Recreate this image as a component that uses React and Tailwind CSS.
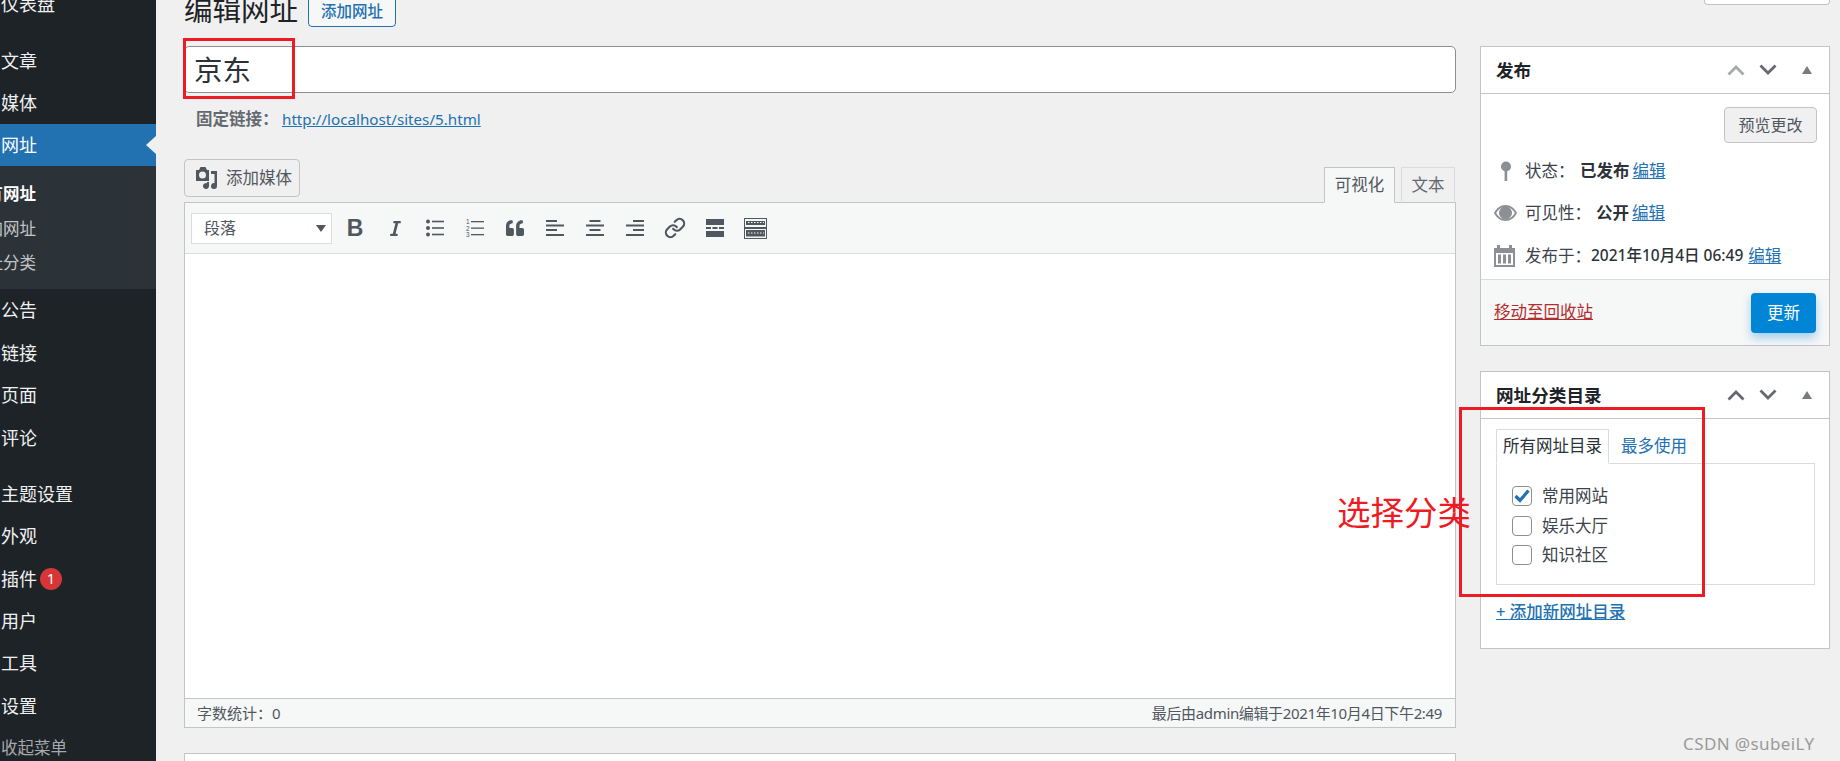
import React from "react";
import { Link as LinkIcon } from "lucide-react";
import { FaItalic, FaQuoteLeft } from "react-icons/fa";

const menuMid = ["公告", "链接", "页面", "评论"];
const menuBottom = ["主题设置", "外观", "插件", "用户", "工具", "设置"];

const SideItem = ({ label, children }) => (
  <div className="h-[42.4px] flex items-center pl-[1px] text-[18px] leading-none text-[#f0f0f1] whitespace-nowrap">
    {label}
    {children}
  </div>
);

const Chevron = ({ up, color }) => (
  <svg width="18" height="12" viewBox="0 0 18 12" fill="none" stroke={color} strokeWidth="2.8">
    <polyline points={up ? "1.5,10.5 9,3 16.5,10.5" : "1.5,1.5 9,9 16.5,1.5"} />
  </svg>
);

const Triangle = () => (
  <svg width="10" height="8" viewBox="0 0 10 8" fill="#787c82">
    <polygon points="5,0 10,8 0,8" />
  </svg>
);

const BoxHeader = ({ title, upColor }) => (
  <div className="h-[47px] flex items-center pl-[15px] pr-[17px] border-b border-[#c3c4c7]">
    <span className="flex-1 text-[17.6px] font-bold text-[#1d2327]">{title}</span>
    <div className="flex items-center gap-[14px]">
      <Chevron up color={upColor} />
      <Chevron color="#646970" />
    </div>
    <div className="ml-[25px]">
      <Triangle />
    </div>
  </div>
);

const ToolIcon = ({ children }) => (
  <div className="w-[40px] h-[30px] flex items-center justify-center text-[#50575e]">{children}</div>
);

const AlignIcon = ({ lines }) => (
  <svg width="18" height="18" viewBox="0 0 18 18" fill="#50575e">
    {lines.map(([x, y, w]) => (
      <rect key={y} x={x} y={y} width={w} height="2" />
    ))}
  </svg>
);

const BulletIcon = () => (
  <svg width="18" height="18" viewBox="0 0 18 18" fill="#50575e">
    <circle cx="2" cy="2.5" r="2" />
    <circle cx="2" cy="9" r="2" />
    <circle cx="2" cy="15.5" r="2" />
    <rect x="6" y="1.7" width="12" height="1.6" />
    <rect x="6" y="8.2" width="12" height="1.6" />
    <rect x="6" y="14.7" width="12" height="1.6" />
  </svg>
);

const NumberIcon = () => (
  <svg width="18" height="20" viewBox="0 0 18 20" fill="#50575e">
    <text x="0" y="6" fontSize="6.5" fontFamily="Liberation Sans">1</text>
    <text x="0" y="12.5" fontSize="6.5" fontFamily="Liberation Sans">2</text>
    <text x="0" y="19" fontSize="6.5" fontFamily="Liberation Sans">3</text>
    <rect x="5" y="3" width="13" height="1.3" />
    <rect x="5" y="9.5" width="13" height="1.3" />
    <rect x="5" y="16" width="13" height="1.3" />
  </svg>
);

const MoreIcon = () => (
  <svg width="18" height="20" viewBox="0 0 18 20" fill="#50575e">
    <rect x="0" y="1" width="18" height="6" />
    <rect x="0" y="9" width="5" height="2" />
    <rect x="6.5" y="9" width="5" height="2" />
    <rect x="13" y="9" width="5" height="2" />
    <rect x="0" y="13" width="18" height="6" />
  </svg>
);

const KitchenIcon = () => (
  <svg width="23" height="21" viewBox="0 0 23 21" fill="none" stroke="#50575e">
    <rect x="0.5" y="0.5" width="22" height="20" strokeWidth="1" />
    <rect x="2" y="3" width="19" height="4" fill="#50575e" stroke="none" />
    <line x1="0" y1="10" x2="23" y2="10" strokeWidth="2" />
    <rect x="2" y="12" width="19" height="6.5" fill="#50575e" stroke="none" />
    <line x1="4" y1="4.5" x2="20" y2="4.5" stroke="#f6f7f7" strokeDasharray="1.5 1.5" />
    <line x1="4" y1="15" x2="20" y2="15" stroke="#f6f7f7" strokeDasharray="1.5 1.5" />
  </svg>
);

const MediaIcon = () => (
  <svg width="22" height="22" viewBox="0 0 22 22" fill="#50575e">
    <path d="M0 3h3l1.500-3h5L11 3h2v11H0z M6.500 4.500a3.500 3.500 0 1 0 0 7a3.500 3.500 0 0 0 0-7z" fillRule="evenodd" />
    <path d="M15 4h6v15a3 3 0 1 1-2.500-3V7H15z" />
    <path d="M11 15h2v4a3 3 0 1 1-2-2.800z" />
  </svg>
);

const PinIcon = () => (
  <svg width="12" height="20" viewBox="0 0 12 20" fill="#8c8f94">
    <circle cx="6" cy="5.5" r="5" />
    <rect x="4.6" y="9" width="2.6" height="11" />
  </svg>
);

const EyeIcon = () => (
  <svg width="23" height="16" viewBox="0 0 23 16" fill="#8c8f94">
    <path
      fillRule="evenodd"
      d="M11.5 0C6.5 0 2.4 3.2 0 8c2.4 4.800 6.500 8 11.500 8S20.600 12.800 23 8c-2.400-4.800-6.500-8-11.500-8zM2.200 8C3.800 5.200 6 3.200 8.200 2.300a6.500 6.500 0 1 0 6.600 0C17 3.200 19.200 5.200 20.800 8c-2 3.500-5.400 6.300-9.300 6.300S4.200 11.500 2.200 8z"
    />
  </svg>
);

const CalendarIcon = () => (
  <svg width="21" height="22" viewBox="0 0 21 22" fill="#8c8f94">
    <path fillRule="evenodd" d="M0 3h3V0h3v3h9V0h3v3h3v19H0zM2 8v12h17V8z" />
    <rect x="4" y="9.500" width="3" height="9" />
    <rect x="9" y="9.500" width="3" height="9" />
    <rect x="14" y="9.500" width="3" height="9" />
  </svg>
);

const Check = ({ checked }) => (
  <span className="w-[20px] h-[20px] shrink-0 rounded-[4px] border border-[#8c8f94] bg-white flex items-center justify-center">
    {checked && (
      <svg width="16" height="14" viewBox="0 0 16 14" fill="none" stroke="#2271b1" strokeWidth="3.2">
        <polyline points="1.500,7 6,11.500 14.500,1.500" />
      </svg>
    )}
  </span>
);

export default function App() {
  return (
    <div className="relative w-[1840px] h-[761px] overflow-hidden flex bg-[#f0f0f0] font-['Noto_Sans','Noto_Sans_CJK_SC',sans-serif] text-[#3c434a]">
      {/* admin menu, the page is scrolled and its left edge cut off */}
      <aside className="w-[156px] shrink-0 bg-[#1d2327] overflow-hidden">
        <div className="-mt-[17px]">
          <SideItem label="仪表盘" />
          <div className="h-[14px]" />
          <SideItem label="文章" />
          <SideItem label="媒体" />
          <div className="relative h-[42px] bg-[#2271b1] flex items-center pl-[1px] text-[18px] leading-none text-white">
            网址
            <span className="absolute right-0 top-[12px] w-0 h-0 border-y-[9px] border-y-transparent border-r-[10px] border-r-[#f0f0f0]" />
          </div>
          <div className="h-[123px] bg-[#2c3338] pt-[11px] text-[16.5px] leading-none whitespace-nowrap">
            <div className="h-[34.5px] flex items-center -ml-[30px] font-bold text-white">所有网址</div>
            <div className="h-[34.5px] flex items-center -ml-[30px] text-[#c3c4c7]">添加网址</div>
            <div className="h-[34.5px] flex items-center -ml-[30px] text-[#c3c4c7]">网址分类</div>
          </div>
          {menuMid.map((m) => (
            <SideItem key={m} label={m} />
          ))}
          <div className="h-[14px]" />
          {menuBottom.map((m) => (
            <SideItem key={m} label={m}>
              {m === "插件" && (
                <span className="ml-[3px] w-[22px] h-[22px] rounded-full bg-[#d63638] text-white text-[14px] flex items-center justify-center">
                  1
                </span>
              )}
            </SideItem>
          ))}
          <div className="h-[42px] flex items-center pl-[1px] text-[16.5px] leading-none text-[#a7aaad]">收起菜单</div>
        </div>
      </aside>

      <main className="flex-1 flex pl-[28px] pr-[10px] gap-[24px] items-start min-w-0">
        {/* left column */}
        <div className="w-[1272px] shrink-0">
          <div className="h-[28px] flex items-end gap-[10px] overflow-hidden">
            <h1 className="text-[28.5px] leading-[36px] text-[#1d2327] whitespace-nowrap">编辑网址</h1>
            <span className="h-[40px] w-[88px] mb-px rounded-[4px] border border-[#2271b1] bg-[#f6f7f7] text-[#2271b1] text-[15.500px] flex items-end justify-center pb-[3px] font-medium">
              添加网址
            </span>
          </div>
          <div className="mt-[18px] h-[47px] rounded-[5px] border border-[#8c8f94] bg-white flex items-center pl-[9px] pt-px text-[28.500px] text-[#2c3338]">
            京东
          </div>
          <div className="mt-[14px] h-[24px] flex items-center pl-[12px] text-[#646970]">
            <span className="font-semibold w-[86px] text-[16.500px] whitespace-nowrap">固定链接：</span>
            <a className="text-[#2271b1] underline text-[15.200px]">http://localhost/sites/5.html</a>
          </div>
          <div className="mt-[28px] flex items-end justify-between">
            <div className="w-[116px] h-[38px] mb-[5px] rounded-[4px] border border-[#c3c4c7] bg-[#f0f0f0] flex items-center pl-[11px] gap-[8px] text-[16.500px] text-[#50575e]">
              <MediaIcon />
              添加媒体
            </div>
            <div className="flex gap-[6px] pr-px -mb-px relative">
              <div className="w-[71px] h-[36px] border border-[#c3c4c7] border-b-[#f6f7f7] bg-[#f6f7f7] flex items-center justify-center text-[16.500px] text-[#50575e]">
                可视化
              </div>
              <div className="w-[54px] h-[36px] border border-[#dcdcde] border-b-[#c3c4c7] bg-[#f0f0f0] flex items-center justify-center text-[16.500px] text-[#646970]">
                文本
              </div>
            </div>
          </div>
          <div className="border border-[#c3c4c7]">
            <div className="h-[51px] bg-[#f6f7f7] border-b border-[#dcdcde] flex items-center pl-[6px]">
              <div className="w-[141px] h-[31px] bg-white border border-[#dcdcde] flex items-center justify-between pl-[12px] pr-[5px] mr-[3px] text-[16px] text-[#50575e]">
                段落
                <span className="w-0 h-0 border-x-[5px] border-x-transparent border-t-[7px] border-t-[#50575e]" />
              </div>
              <ToolIcon><span className="font-['Liberation_Sans',sans-serif] font-bold text-[23px] leading-none">B</span></ToolIcon>
              <ToolIcon><FaItalic size={17} /></ToolIcon>
              <ToolIcon><BulletIcon /></ToolIcon>
              <ToolIcon><NumberIcon /></ToolIcon>
              <ToolIcon><FaQuoteLeft size={18} /></ToolIcon>
              <ToolIcon>
                <AlignIcon lines={[[0, 1, 11], [0, 5.500, 18], [0, 10, 11], [0, 15, 18]]} />
              </ToolIcon>
              <ToolIcon>
                <AlignIcon lines={[[3.500, 1, 11], [0, 5.500, 18], [3.500, 10, 11], [0, 15, 18]]} />
              </ToolIcon>
              <ToolIcon>
                <AlignIcon lines={[[7, 1, 11], [0, 5.500, 18], [7, 10, 11], [0, 15, 18]]} />
              </ToolIcon>
              <ToolIcon><LinkIcon size={22} strokeWidth={2.4} /></ToolIcon>
              <ToolIcon><MoreIcon /></ToolIcon>
              <ToolIcon><KitchenIcon /></ToolIcon>
            </div>
            <div className="h-[444px] bg-white" />
            <div className="h-[29px] bg-[#f6f7f7] border-t border-[#c3c4c7] flex items-center justify-between pl-[12px] pr-[13px] text-[15px] text-[#50575e]">
              <span>字数统计：0</span>
              <span className="tracking-[-0.35px]">最后由admin编辑于2021年10月4日下午2:49</span>
            </div>
          </div>
          <div className="mt-[25px] h-[40px] border border-[#c3c4c7] bg-white" />
        </div>

        {/* right column */}
        <div className="w-[350px] shrink-0">
          <div className="flex justify-end">
            <div className="w-[126px] h-[5px] bg-white border border-t-0 border-[#c3c4c7] rounded-b-[4px]" />
          </div>
          <div className="mt-[41px] h-[300px] border border-[#c3c4c7] bg-white flex flex-col">
            <BoxHeader title="发布" upColor="#a7aaad" />
            <div className="flex-1">
              <div className="flex justify-end pt-[13px] pr-[12px]">
                <div className="w-[93px] h-[36px] rounded-[4px] border border-[#c3c4c7] bg-[#f0f0f0] flex items-center justify-center text-[16px] text-[#50575e]">
                  预览更改
                </div>
              </div>
              <div className="pl-[13px] mt-[7px] text-[16.500px] whitespace-nowrap">
                <div className="h-[42px] flex items-center">
                  <span className="w-[31px] shrink-0 flex pl-[6px]"><PinIcon /></span>
                  <span className="w-[55px]">状态：</span>
                  <span className="font-bold text-[#2c3338]">已发布</span>
                  <a className="ml-[3px] text-[#2271b1] underline">编辑</a>
                </div>
                <div className="h-[42px] flex items-center">
                  <span className="w-[31px] shrink-0 flex"><EyeIcon /></span>
                  <span className="w-[71px]">可见性：</span>
                  <span className="font-bold text-[#2c3338]">公开</span>
                  <a className="ml-[3px] text-[#2271b1] underline">编辑</a>
                </div>
                <div className="h-[44px] flex items-center">
                  <span className="w-[31px] shrink-0 flex"><CalendarIcon /></span>
                  <span className="w-[66px]">发布于：</span>
                  <span className="font-medium text-[15.500px] text-[#2c3338]">2021年10月4日 06:49</span>
                  <a className="ml-[5px] text-[#2271b1] underline">编辑</a>
                </div>
              </div>
            </div>
            <div className="h-[66px] bg-[#f6f7f7] border-t border-[#dcdcde] flex items-center justify-between pl-[13px] pr-[13px]">
              <a className="text-[16.500px] text-[#b32d2e] underline">移动至回收站</a>
              <div className="w-[65px] h-[40px] mt-[1px] rounded-[4px] bg-[#0085d6] shadow-[0_5px_10px_rgba(0,133,214,0.35)] flex items-center justify-center text-[16.500px] text-white">
                更新
              </div>
            </div>
          </div>
          <div className="mt-[25px] h-[278px] border border-[#c3c4c7] bg-white">
            <BoxHeader title="网址分类目录" upColor="#646970" />
            <div className="pl-[15px] pr-[14px] pt-[9px]">
              <div className="flex h-[35px] items-end">
                <div className="w-[113px] h-[35px] -mb-px relative z-10 border border-[#dcdcde] border-b-white bg-white flex items-center justify-center text-[16.500px] whitespace-nowrap text-[#2c3338]">
                  所有网址目录
                </div>
                <a className="ml-[12px] h-[34px] flex items-center text-[16.500px] text-[#2271b1]">最多使用</a>
              </div>
              <div className="h-[122px] border border-[#dcdcde] pt-[22px] pl-[15px] text-[16.500px] text-[#3c434a]">
                <label className="h-[20px] flex items-center gap-[10px]"><Check checked />常用网站</label>
                <label className="mt-[10px] h-[20px] flex items-center gap-[10px]"><Check />娱乐大厅</label>
                <label className="mt-[9px] h-[20px] flex items-center gap-[10px]"><Check />知识社区</label>
              </div>
              <a className="mt-[15px] block text-[16.500px] leading-[24px] font-medium text-[#2271b1] underline">+ 添加新网址目录</a>
            </div>
          </div>
        </div>
      </main>

      {/* annotations drawn on top of the screenshot */}
      <div className="absolute left-[183px] top-[38px] w-[112px] h-[61px] border-[3px] border-[#ed1c24]" />
      <div className="absolute left-[1459px] top-[407px] w-[246px] h-[190px] border-[3px] border-[#ed1c24]" />
      <span className="absolute left-[1337px] top-[488px] text-[33.500px] leading-[48px] text-[#ed1c24] whitespace-nowrap">选择分类</span>
      <span className="absolute left-[1683px] top-[732px] text-[17px] leading-[24px] text-[#9a9a9a] tracking-[0.4px] whitespace-nowrap">CSDN @subeiLY</span>
    </div>
  );
}
